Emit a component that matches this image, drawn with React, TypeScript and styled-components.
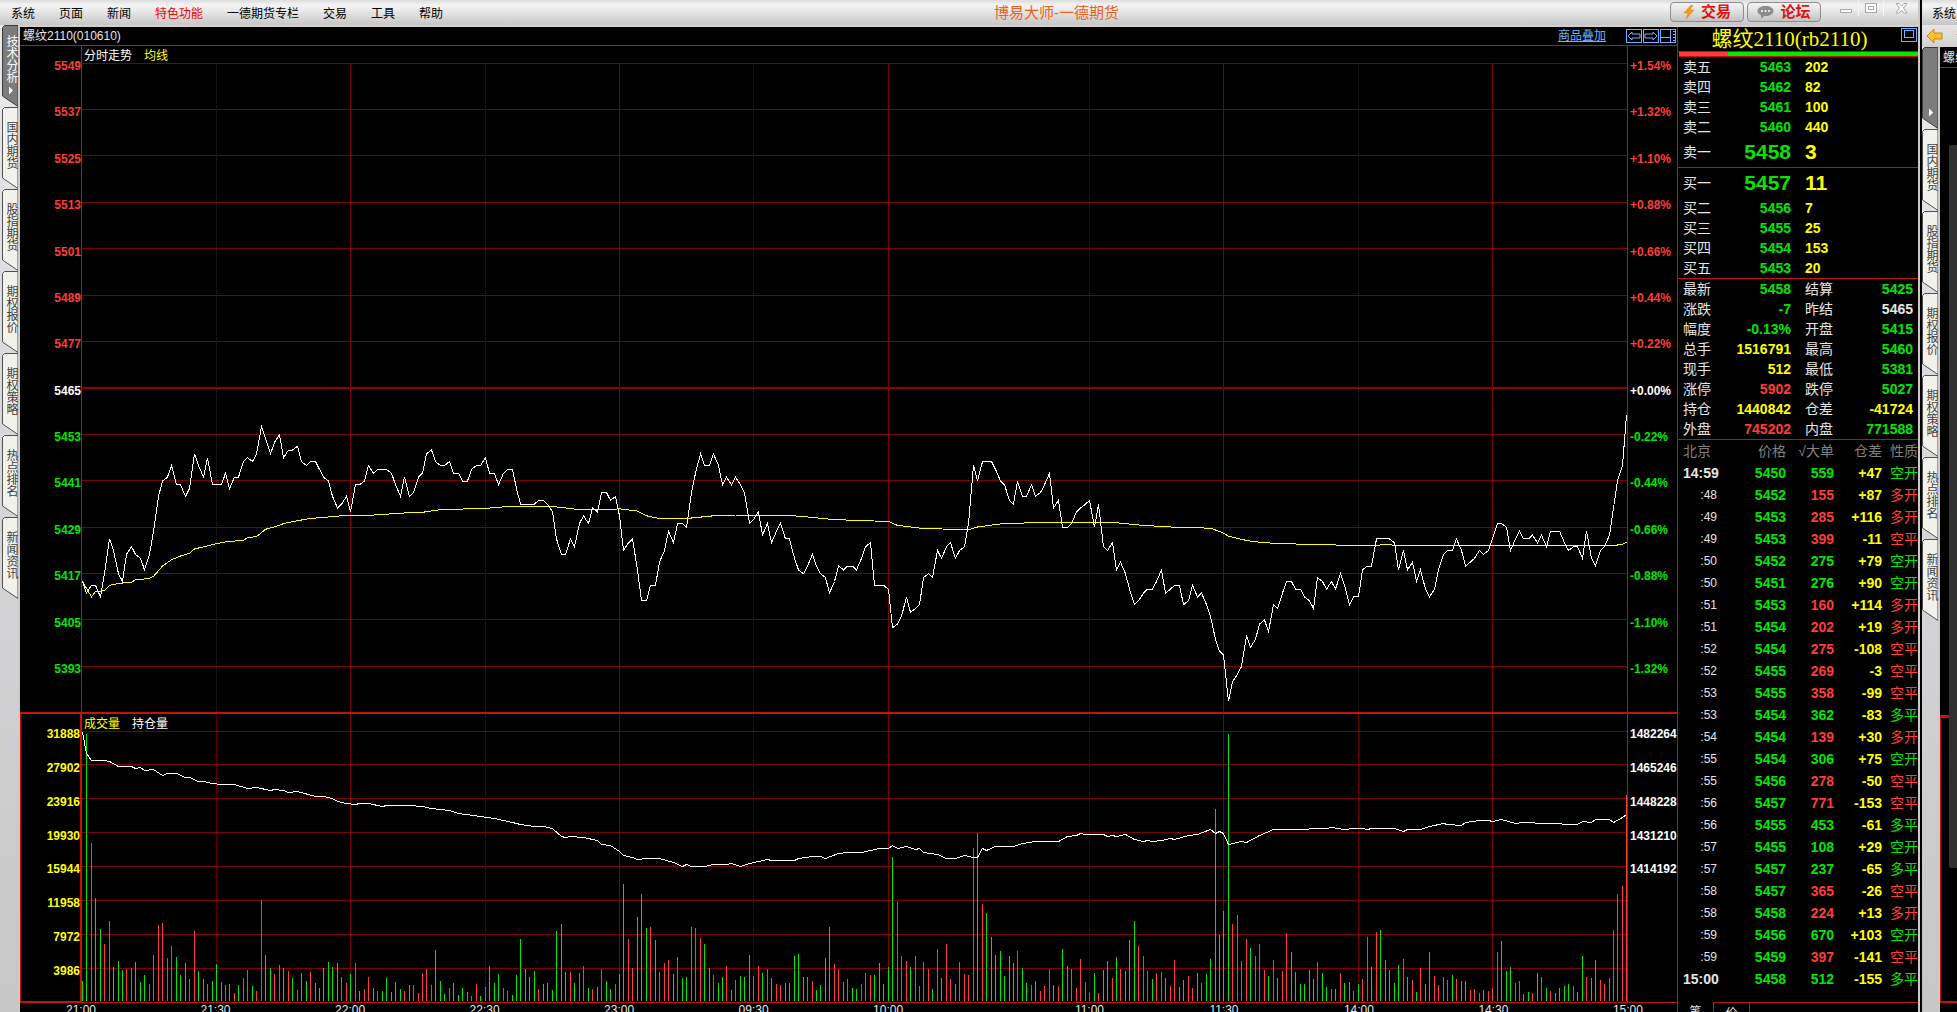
import React from "react";
import styled, { createGlobalStyle, css } from "styled-components";

const color = {
  red: "#ff3c37",
  green: "#00e600",
  yellow: "#ffff00",
  white: "#ffffff",
  text: "#e6e6e6",
  dim: "#808080",
  axis: "#c41408",
  grid: "#800000",
  link: "#6cb4ff",
};

type Tone = "red" | "green" | "yellow" | "white" | "text";

const Global = createGlobalStyle`
  * { box-sizing: border-box; }
  body {
    margin: 0;
    background: #000;
    font: 12px "Liberation Sans", "Noto Sans CJK SC", sans-serif;
    overflow: hidden;
  }
  button {
    font: inherit;
    border: 0;
    padding: 0;
    background: none;
    color: inherit;
    text-align: left;
  }
  svg { display: block; flex: none; }
`;

/* ---------- data ---------- */

const TOTAL_MINUTES = 345;

// Minute closes, 21:00 to 15:00.
const prices = [
  5415, 5412, 5414, 5414, 5411, 5417, 5426, 5423, 5417, 5415, 5422, 5424, 5422, 5421, 5418,
  5422, 5428, 5437, 5441, 5442, 5445, 5440, 5440, 5437, 5439, 5448, 5445, 5442, 5447, 5440,
  5440, 5440, 5443, 5439, 5442, 5442, 5446, 5447, 5446, 5448, 5455, 5452, 5448, 5451, 5453,
  5447, 5449, 5449, 5450, 5446, 5445, 5446, 5446, 5444, 5442, 5441, 5437, 5434, 5435, 5437,
  5433, 5440, 5440, 5441, 5445, 5443, 5444, 5444, 5444, 5443, 5440, 5437, 5442, 5437, 5438,
  5442, 5443, 5448, 5449, 5446, 5445, 5445, 5446, 5443, 5443, 5441, 5441, 5444, 5445, 5445,
  5447, 5443, 5443, 5440, 5443, 5444, 5444, 5439, 5435, 5435, 5435, 5435, 5436, 5436, 5435,
  5433, 5426, 5422, 5422, 5426, 5424, 5430, 5432, 5430, 5434, 5433, 5438, 5438, 5436, 5437,
  5432, 5423, 5425, 5426, 5418, 5410, 5410, 5414, 5414, 5420, 5423, 5428, 5425, 5430, 5430,
  5429, 5438, 5443, 5448, 5445, 5445, 5448, 5445, 5440, 5442, 5440, 5442, 5440, 5438, 5430,
  5431, 5433, 5427, 5430, 5425, 5428, 5430, 5426, 5426, 5421, 5418, 5417, 5419, 5422, 5419,
  5417, 5416, 5412, 5415, 5419, 5418, 5419, 5419, 5418, 5421, 5424, 5425, 5414, 5414, 5414,
  5413, 5403, 5404, 5406, 5411, 5407, 5408, 5409, 5416, 5417, 5416, 5423, 5421, 5424, 5425,
  5421, 5423, 5424, 5430, 5445, 5441, 5446, 5446, 5446, 5444, 5441, 5440, 5436, 5435, 5441,
  5437, 5437, 5440, 5437, 5438, 5440, 5443, 5434, 5436, 5429, 5429, 5430, 5433, 5434, 5435,
  5436, 5429, 5435, 5424, 5423, 5425, 5418, 5420, 5417, 5413, 5409, 5410, 5412, 5413, 5413,
  5415, 5418, 5412, 5413, 5414, 5414, 5409, 5410, 5414, 5411, 5412, 5409, 5406, 5400, 5397,
  5396, 5384, 5389, 5391, 5393, 5401, 5398, 5400, 5404, 5405, 5402, 5409, 5408, 5412, 5415,
  5415, 5413, 5413, 5411, 5410, 5408, 5416, 5415, 5413, 5415, 5413, 5417, 5414, 5409, 5411,
  5411, 5418, 5419, 5419, 5426, 5426, 5426, 5426, 5425, 5418, 5423, 5418, 5420, 5415, 5418,
  5413, 5411, 5413, 5418, 5422, 5423, 5423, 5426, 5423, 5419, 5420, 5421, 5423, 5422, 5423,
  5426, 5430, 5430, 5429, 5423, 5426, 5428, 5426, 5426, 5427, 5425, 5427, 5424, 5428, 5428,
  5428, 5425, 5423, 5424, 5424, 5421, 5428, 5421, 5419, 5423, 5424, 5427, 5434, 5441, 5445,
  5458,
];

// [minute, average price]
const average: [number, number][] = [
  [0, 5415], [2, 5411], [3, 5412.4], [5, 5412.6], [6, 5414], [8, 5414.5], [11, 5414.8],
  [12, 5415.4], [15, 5415.8], [16, 5416.3], [18, 5419], [20, 5420.6], [22, 5421.6],
  [24, 5422.3], [25, 5423.4], [30, 5424.8], [32, 5425.2], [36, 5425.7], [37, 5426.3],
  [39, 5426.6], [41, 5428.5], [44, 5429.5], [45, 5430], [49, 5430.9], [51, 5431.3],
  [58, 5432], [64, 5432.1], [72, 5432.7], [76, 5432.9], [80, 5433.6], [90, 5433.9],
  [94, 5434.3], [106, 5434.3], [111, 5433.6], [118, 5433.6], [120, 5433.8], [124, 5433.2],
  [126, 5432], [129, 5431.3], [135, 5431.3], [141, 5432], [146, 5432.2], [154, 5432.2],
  [160, 5431.9], [168, 5431], [180, 5430.5], [182, 5429.5], [188, 5428.7], [198, 5428.4],
  [200, 5429.1], [205, 5429.9], [212, 5430.2], [231, 5430.2], [236, 5429.6], [240, 5429.3],
  [246, 5428.9], [252, 5428.8], [255, 5427.5], [256, 5426.7], [260, 5425.6], [264, 5425],
  [275, 5424.5], [288, 5424.3], [291, 5424.5], [295, 5424.3], [342, 5424.3], [344, 5424.6],
  [345, 5425.2],
];

// Bar heights per minute; below zero marks a falling minute.
const volumes = [
  -20, -267, 158, -103, -72, 57, 80, -34, -40, -31, 32, 33, -39, -19, -26,
  17, 46, 76, 78, 43, 55, -44, -26, -38, 22, 70, -30, -22, 17, -20,
  -37, -19, 16, -17, 8, -16, 23, 31, -15, 10, 101, -46, -33, 27, 36,
  -33, 30, -23, 11, -28, -20, 29, -18, -13, -33, -39, -34, -38, 24, 18,
  -27, 38, -10, 12, 24, -13, 10, -10, -23, -9, -19, -12, 10, -16, 16,
  8, 28, 32, 16, -51, -20, -7, 13, -18, -6, -13, -9, 5, 17, -5,
  14, -35, -18, -27, 13, 10, -6, -26, -62, -32, -24, -30, 12, -17, -18,
  -11, -70, -77, -29, 29, -18, 28, 35, -13, 12, -14, 32, -20, -12, 17,
  -27, -117, 62, 33, -84, -107, -73, 74, -61, 29, 38, 41, -27, 44, -23,
  -24, 74, 73, 63, -57, -33, 26, -18, -24, 35, -11, 21, -25, -24, -46,
  25, 35, -28, 32, -23, 17, 16, -18, -18, -45, -47, -24, 24, 20, -11,
  -16, -43, -74, 37, 32, -19, 22, -13, -12, 17, 28, 26, -26, -38, -17,
  -34, -144, 99, 45, 40, -34, 45, 15, 39, 32, -12, 52, -23, 57, 22,
  -17, 39, 27, 26, 153, -168, 97, -88, -64, -46, -50, -25, -45, -38, 50,
  -33, -18, 16, -20, 10, 15, 32, -16, 15, -52, -35, 32, 13, 42, 19,
  8, -28, 8, -31, -40, 23, -44, 32, -30, -61, -80, 55, 45, 30, -22,
  28, 29, -23, 15, 41, -14, -21, 25, 13, -28, 18, -27, -42, -192, -66,
  -90, -267, 77, 86, 40, 62, -53, 45, 57, 31, -25, 41, -23, 30, 68,
  -49, -29, -17, -17, -31, -22, 39, -28, -14, 12, -12, 28, -18, -19, 10,
  -17, 22, 64, -34, 69, -71, -41, -31, -18, -36, 42, -24, 21, -9, 33,
  -17, -49, 25, 16, 24, 21, -26, 22, -20, -20, 11, 12, 8, -11, 10,
  13, 49, -60, -30, -34, 18, 20, -7, -9, 8, -28, 24, -13, 10, -8,
  -13, -15, -17, 15, -9, -45, 24, -23, -41, 21, 17, 23, 71, 107, 115,
  206,
];

// [minute, depth below the pane top] of the open interest curve
const openInterest: [number, number][] = [
  [0, 18], [1, 39], [2, 46], [5, 46], [6, 47], [8, 52], [11, 52], [12, 54], [13, 53], [14, 56],
  [16, 55], [18, 61], [19, 59], [21, 59], [23, 63], [24, 63], [26, 67], [27, 67], [29, 69],
  [31, 70], [34, 70], [37, 74], [39, 73], [42, 76], [43, 75], [45, 76], [46, 78], [48, 77],
  [52, 82], [54, 82], [56, 84], [57, 87], [59, 89], [61, 90], [62, 89], [64, 89], [67, 92],
  [68, 91], [73, 91], [76, 92], [78, 94], [82, 96], [84, 99], [89, 102], [92, 104], [96, 108],
  [98, 110], [101, 112], [103, 112], [105, 114], [107, 122], [108, 123], [109, 122], [112, 123],
  [115, 126], [116, 130], [118, 131], [120, 137], [121, 141], [123, 143], [124, 145], [126, 144],
  [129, 144], [132, 148], [134, 152], [135, 150], [136, 152], [139, 152], [141, 150], [144, 150],
  [145, 149], [147, 152], [149, 149], [153, 145], [154, 146], [159, 146], [160, 144], [163, 142],
  [165, 142], [166, 144], [169, 139], [171, 138], [174, 138], [178, 134], [180, 134], [181, 131],
  [182, 134], [184, 132], [186, 135], [187, 134], [188, 138], [191, 140], [193, 144], [195, 144],
  [197, 141], [199, 143], [200, 143], [201, 134], [202, 136], [204, 132], [208, 132], [210, 129],
  [213, 127], [218, 127], [220, 122], [222, 121], [223, 119], [224, 120], [228, 120], [229, 122],
  [230, 121], [231, 122], [233, 120], [235, 125], [237, 127], [238, 126], [239, 127], [241, 126],
  [243, 124], [244, 125], [247, 121], [249, 120], [252, 115], [253, 119], [254, 117], [255, 119],
  [256, 130], [259, 127], [260, 128], [263, 121], [266, 115], [270, 115], [278, 114], [279, 113],
  [282, 115], [284, 114], [286, 114], [287, 115], [288, 114], [293, 114], [295, 117], [296, 115],
  [299, 115], [301, 112], [304, 109], [305, 110], [308, 111], [309, 108], [312, 106], [314, 106],
  [315, 107], [317, 105], [320, 109], [322, 108], [324, 108], [325, 109], [330, 109], [331, 110],
  [334, 110], [335, 107], [337, 108], [338, 105], [341, 105], [342, 108], [344, 103], [345, 100],
];

const priceScale: [string, string, Tone][] = [
  ["5549", "+1.54%", "red"], ["5537", "+1.32%", "red"], ["5525", "+1.10%", "red"],
  ["5513", "+0.88%", "red"], ["5501", "+0.66%", "red"], ["5489", "+0.44%", "red"],
  ["5477", "+0.22%", "red"], ["5465", "+0.00%", "white"], ["5453", "-0.22%", "green"],
  ["5441", "-0.44%", "green"], ["5429", "-0.66%", "green"], ["5417", "-0.88%", "green"],
  ["5405", "-1.10%", "green"], ["5393", "-1.32%", "green"],
];

const volumeScale = ["31888", "27902", "23916", "19930", "15944", "11958", "7972", "3986"];
const interestScale = ["1482264", "1465246", "1448228", "1431210", "1414192", "", "", ""];

// [label, minutes until the next label, dotted grid line]
const timeTicks: [string, number, boolean][] = [
  ["21:00", 30, false], ["21:30", 30, true], ["22:00", 30, false], ["22:30", 30, true],
  ["23:00", 30, false], ["09:30", 30, true], ["10:00", 45, false], ["11:00", 30, true],
  ["11:30", 30, false], ["14:00", 30, true], ["14:30", 30, false], ["15:00", 0, false],
];

const asks = [["卖五", "5463", "202"], ["卖四", "5462", "82"], ["卖三", "5461", "100"], ["卖二", "5460", "440"], ["卖一", "5458", "3"]];
const bids = [["买一", "5457", "11"], ["买二", "5456", "7"], ["买三", "5455", "25"], ["买四", "5454", "153"], ["买五", "5453", "20"]];

const stats: [string, string, Tone, string, string, Tone][] = [
  ["最新", "5458", "green", "结算", "5425", "green"],
  ["涨跌", "-7", "green", "昨结", "5465", "text"],
  ["幅度", "-0.13%", "green", "开盘", "5415", "green"],
  ["总手", "1516791", "yellow", "最高", "5460", "green"],
  ["现手", "512", "yellow", "最低", "5381", "green"],
  ["涨停", "5902", "red", "跌停", "5027", "green"],
  ["持仓", "1440842", "yellow", "仓差", "-41724", "yellow"],
  ["外盘", "745202", "red", "内盘", "771588", "green"],
];

const trades: [string, string, string, string, string, Tone][] = [
  ["14:59", "5450", "559", "+47", "空开", "green"],
  [":48", "5452", "155", "+87", "多开", "red"],
  [":49", "5453", "285", "+116", "多开", "red"],
  [":49", "5453", "399", "-11", "空平", "red"],
  [":50", "5452", "275", "+79", "空开", "green"],
  [":50", "5451", "276", "+90", "空开", "green"],
  [":51", "5453", "160", "+114", "多开", "red"],
  [":51", "5454", "202", "+19", "多开", "red"],
  [":52", "5454", "275", "-108", "空平", "red"],
  [":52", "5455", "269", "-3", "空平", "red"],
  [":53", "5455", "358", "-99", "空平", "red"],
  [":53", "5454", "362", "-83", "多平", "green"],
  [":54", "5454", "139", "+30", "多开", "red"],
  [":55", "5454", "306", "+75", "空开", "green"],
  [":55", "5456", "278", "-50", "空平", "red"],
  [":56", "5457", "771", "-153", "空平", "red"],
  [":56", "5455", "453", "-61", "多平", "green"],
  [":57", "5455", "108", "+29", "空开", "green"],
  [":57", "5457", "237", "-65", "多平", "green"],
  [":58", "5457", "365", "-26", "空平", "red"],
  [":58", "5458", "224", "+13", "多开", "red"],
  [":59", "5456", "670", "+103", "空开", "green"],
  [":59", "5459", "397", "-141", "空平", "red"],
  ["15:00", "5458", "512", "-155", "多平", "green"],
];

const menu = ["系统", "页面", "新闻", "特色功能", "一德期货专栏", "交易", "工具", "帮助"];
const sideTabs = ["国内期货", "股指期货", "期权报价", "期权策略", "热点排名", "新闻资讯"];

/* ---------- frame ---------- */

const Screen = styled.div`
  display: flex;
  height: 100vh;
  overflow: hidden;
  background: #000;
  color: ${color.text};
`;

const AppWindow = styled.div<{ $main?: boolean }>`
  display: flex;
  flex-direction: column;
  min-width: 0;
  overflow: hidden;
  ${(p) =>
    p.$main
      ? css`
          flex: 1;
          border-right: 2px solid #d0c8c6;
          margin-right: 2px;
        `
      : css`
          flex: 0 0 35px;
        `}
`;

const MenuBar = styled.header`
  flex: none;
  display: flex;
  height: 27px;
  padding-left: 11px;
  background: linear-gradient(#dcdcdc 0, #f4f4f4 5px, #ececec 9px, #c6c6c6 25px, #d4cecc 25px);
  overflow: hidden;
`;

const MenuNav = styled.nav`
  display: flex;
  gap: 24px;
`;

const MenuItem = styled.button<{ $hot?: boolean }>`
  height: 25px;
  color: ${(p) => (p.$hot ? "#ff0000" : "#000")};
  white-space: nowrap;
`;

const WindowTitle = styled.h1`
  flex: 1;
  margin: 0;
  font-size: 15px;
  font-weight: 400;
  line-height: 26px;
  text-align: center;
  color: #f0611e;
`;

const MenuActions = styled.div`
  display: flex;
  gap: 3px;
  padding-top: 2px;
`;

const ActionButton = styled.button`
  display: flex;
  align-items: center;
  justify-content: center;
  gap: 6px;
  width: 74px;
  height: 20px;
  border: 1px solid #8c8c8c;
  border-radius: 4px;
  background: linear-gradient(#f4f4f4, #dedede 50%, #c2c2c2);
  font-size: 15px;
  font-weight: 700;
  line-height: 18px;
  color: #dc1414;
`;

const WindowControls = styled.div`
  display: flex;
  padding-left: 13px;
`;

const ControlButton = styled.button`
  display: flex;
  align-items: center;
  justify-content: center;
  width: 25px;
  height: 16px;
  border-right: 1px solid #f4f4f4;
  &:last-child { width: 34px; border-right: 0; }
`;

const WindowBody = styled.div`
  flex: 1;
  display: flex;
  min-height: 0;
`;

/* ---------- side tabs ---------- */

const TabRail = styled.nav<{ $flush?: boolean }>`
  flex: none;
  width: ${(p) => (p.$flush ? 18 : 20)}px;
  padding-left: ${(p) => (p.$flush ? 0 : 2)}px;
  margin-top: -2px;
  border-right: 2px solid #cfc8c6;
  background: linear-gradient(#eaeaea, #dcdce0 30%, #c6c6c6);
`;

const SideTab = styled.button<{ $active?: boolean }>`
  position: relative;
  display: flex;
  align-items: flex-start;
  width: 16px;
  height: 82px;
  padding: ${(p) => (p.$active ? 10 : 14)}px 0 0 2px;
  color: ${(p) => (p.$active ? "#fff" : "#404040")};
  font-size: 12px;
`;

const TabShape = styled.svg`
  position: absolute;
  inset: 0;
`;

const TabText = styled.span`
  position: relative;
  writing-mode: vertical-rl;
  line-height: 13px;
`;

function VerticalTab({ label, active }: { label: string; active?: boolean }) {
  return (
    <SideTab $active={active} aria-label={label || "当前页"}>
      <TabShape width="16" height="82" viewBox="0 0 16 82" aria-hidden="true">
        <path
          d="M16 .5H2.500L.5 2.500V71L16 81.500Z"
          fill={active ? "#7c7c7c" : "#f2f2ec"}
          stroke={active ? "#3c3c3c" : "#505050"}
        />
        {active && <path d="M7 61.500v8l4-4z" fill="#fff" />}
      </TabShape>
      <TabText>{label}</TabText>
    </SideTab>
  );
}

/* ---------- chart ---------- */

const ChartArea = styled.main`
  flex: 1;
  min-width: 0;
  display: flex;
  flex-direction: column;
  background: #000;
`;

const ChartHeader = styled.div`
  flex: none;
  display: flex;
  align-items: center;
  height: 19px;
  padding: 0 1px 0 3px;
  border-bottom: 1px solid ${color.axis};
`;

const Contract = styled.span`
  flex: 1;
  line-height: 18px;
`;

const OverlayLink = styled.a`
  margin-right: 20px;
  line-height: 18px;
  color: ${color.link};
  text-decoration: underline;
`;

const IconRow = styled.div`
  display: flex;
  gap: 1px;
`;

const Pane = styled.section<{ $grow: number }>`
  flex: ${(p) => p.$grow} 0 0;
  display: grid;
  grid-template-columns: 61px 1fr 49px;
  min-height: 0;
`;

const VolumePane = styled(Pane)`
  border-top: 2px solid ${color.axis};
  border-bottom: 1px solid ${color.axis};
`;

const Scale = styled.div<{ $side: "left" | "right"; $bottom: number; $framed?: boolean }>`
  display: flex;
  flex-direction: column;
  justify-content: space-between;
  padding: 13px 0 ${(p) => p.$bottom}px;
  text-align: ${(p) => (p.$side === "left" ? "right" : "left")};
  ${(p) => p.$side === "right" && "padding-left: 2px;"}
  ${(p) =>
    p.$framed &&
    css`
      border: solid ${color.axis};
      border-width: 0 1px 1px;
    `}
`;

const ScaleLabel = styled.span<{ $tone: Tone }>`
  height: 14px;
  font-size: 12px;
  font-weight: 700;
  line-height: 14px;
  color: ${(p) => color[p.$tone]};
`;

const PlotCell = styled.div`
  position: relative;
  display: flex;
  flex-direction: column;
  min-width: 0;
  min-height: 0;
  border: solid ${color.axis};
  border-width: 0 1px;
`;

const Legend = styled.div<{ $over?: boolean }>`
  flex: none;
  display: flex;
  gap: 12px;
  height: 17px;
  padding-left: 2px;
  line-height: 20px;
  ${(p) => p.$over && "position: absolute; top: 0; left: 0;"}
`;

const LegendItem = styled.span<{ $tone: Tone }>`
  color: ${(p) => color[p.$tone]};
`;

const Plot = styled.svg`
  flex: 1;
  width: 100%;
  height: 0;
  min-height: 0;
`;

const TimeAxis = styled.div`
  flex: none;
  display: flex;
  height: 9px;
  padding: 0 49px 0 61px;
  overflow: hidden;
`;

const TimeTick = styled.span<{ $minutes: number }>`
  flex: ${(p) => p.$minutes} 0 0;
  min-width: 0;
  line-height: 15px;
  color: ${color.text};
  white-space: nowrap;
  text-indent: -15px;
`;

const PLOT_WIDTH = 1545;
const PRICE_HEIGHT = 649;
const VOLUME_HEIGHT = 288;

const minuteX = (m: number) => Math.round(m * 4.4775 - 0.3);
const priceY = (p: number) => (5549 - p) * 3.8654;

const toPoints = (list: [number, number][], y: (v: number) => number) =>
  list.map(([m, v]) => `${minuteX(m) + 0.5},${(y(v) + 0.5).toFixed(1)}`).join(" ");

function TimeGrid({ height }: { height: number }) {
  let minute = 0;
  const lines = timeTicks.map(([label, span, dotted]) => {
    const at = minuteX(minute);
    minute += span;
    return { label, at, dotted };
  });
  return (
    <>
      {lines.slice(1, -1).map((l) => (
        <line
          key={l.label}
          x1={l.at + 0.5}
          x2={l.at + 0.5}
          y1="0"
          y2={height}
          stroke={color.grid}
          strokeDasharray={l.dotted ? "1 1" : undefined}
        />
      ))}
    </>
  );
}

function PriceChart() {
  return (
    <Plot
      viewBox={`0 0 ${PLOT_WIDTH} ${PRICE_HEIGHT}`}
      preserveAspectRatio="none"
      shapeRendering="crispEdges"
      role="img"
      aria-label="分时走势"
    >
      {priceScale.map(([p], i) => (
        <rect key={p} x="0" y={Math.round(i * 46.385 - 0.3)} width={PLOT_WIDTH} height={i === 7 ? 2 : 1} fill={i === 7 ? "#900000" : color.grid} />
      ))}
      <TimeGrid height={PRICE_HEIGHT} />
      <polyline points={toPoints(average, priceY)} fill="none" stroke={color.yellow} />
      <polyline
        points={toPoints(prices.map((p, i) => [i, p] as [number, number]), priceY)}
        fill="none"
        stroke={color.white}
      />
    </Plot>
  );
}

function VolumeChart() {
  return (
    <Plot
      viewBox={`0 0 ${PLOT_WIDTH} ${VOLUME_HEIGHT}`}
      preserveAspectRatio="none"
      shapeRendering="crispEdges"
      role="img"
      aria-label="成交量"
    >
      {volumeScale.map((v, i) => (
        <rect key={v} x="0" y={i === 0 ? 17 : 16 + i * 34} width={PLOT_WIDTH} height="1" fill={color.grid} />
      ))}
      <TimeGrid height={VOLUME_HEIGHT} />
      {volumes.slice(0, TOTAL_MINUTES + 1).map((v, i) => (
        <rect
          key={i}
          x={minuteX(i)}
          y={287 - Math.abs(v)}
          width="1"
          height={Math.abs(v)}
          fill={v < 0 ? color.green : color.red}
        />
      ))}
      <polyline points={toPoints(openInterest, (v) => v)} fill="none" stroke={color.white} />
    </Plot>
  );
}

/* ---------- quote panel ---------- */

const QuotePanel = styled.aside`
  flex: 0 0 241px;
  display: flex;
  flex-direction: column;
  border-left: 1px solid ${color.axis};
  background: #000;
`;

const QuoteHead = styled.div`
  flex: none;
  display: flex;
  height: 25px;
  padding: 1px 1px 0 0;
  border-bottom: 1px solid ${color.axis};
`;

const QuoteTitle = styled.h2`
  flex: 1;
  margin: 0;
  font: 400 21px/22px "Liberation Serif", "Noto Sans CJK SC", serif;
  text-align: center;
  white-space: nowrap;
  color: ${color.yellow};
`;

const PressureBar = styled.div`
  flex: none;
  height: 5px;
  margin-left: 1px;
  border-bottom: 1px solid ${color.axis};
  background: linear-gradient(90deg, ${color.red} 49px, ${color.green} 49px);
`;

const Table = styled.table`
  flex: none;
  width: 100%;
  border-collapse: collapse;
  table-layout: fixed;
  font-size: 14px;
`;

const BookTable = styled(Table)`
  border-bottom: 1px solid ${color.axis};
`;

const Row = styled.tr<{ $h: number }>`
  height: ${(p) => p.$h}px;
`;

const labelStyle = css`
  padding: 0 0 0 5px;
  font-weight: 400;
  text-align: left;
  color: ${color.text};
`;

const RowLabel = styled.th`
  ${labelStyle}
  line-height: 20px;
`;

const Num = styled.td<{ $tone: Tone; $big?: boolean; $left?: boolean; $end?: number }>`
  padding: 0 ${(p) => p.$end ?? 0}px 0 ${(p) => (p.$left ? 14 : 0)}px;
  font-size: ${(p) => (p.$big ? 21 : 14)}px;
  font-weight: 700;
  line-height: 20px;
  text-align: ${(p) => (p.$left ? "left" : "right")};
  white-space: nowrap;
  color: ${(p) => color[p.$tone]};
`;

const SecondLabel = styled.th`
  ${labelStyle}
  padding-left: 14px;
  line-height: 20px;
`;

const HeadCell = styled.th<{ $left?: boolean }>`
  padding: 0 0 0 ${(p) => (p.$left ? 5 : 0)}px;
  font-weight: 400;
  line-height: 20px;
  text-align: ${(p) => (p.$left ? "left" : "right")};
  white-space: nowrap;
  color: ${color.dim};
`;

const TimeCell = styled.td<{ $full: boolean }>`
  padding: 0 4px 0 5px;
  line-height: 20px;
  color: ${color.text};
  ${(p) => (p.$full ? "font-weight: 700; white-space: nowrap;" : "font-size: 12px; text-align: right;")}
`;

const Nature = styled.td<{ $tone: Tone }>`
  padding: 0;
  line-height: 20px;
  text-align: right;
  color: ${(p) => color[p.$tone]};
`;

const FootTabs = styled.div`
  display: flex;
  height: 10px;
  margin-top: auto;
  overflow: hidden;
`;

const FootTab = styled.button<{ $active?: boolean }>`
  width: 36px;
  height: 20px;
  line-height: 16px;
  text-align: center;
  color: ${color.text};
  border: solid ${color.axis};
  border-width: ${(p) => (p.$active ? "0 1px 0 0" : "1px 1px 0 0")};
`;

const FootRule = styled.div`
  flex: 1;
  border-top: 1px solid ${color.axis};
`;

function Book({ rows, best }: { rows: string[][]; best: number }) {
  return (
    <BookTable>
      <colgroup>
        <col width="43" />
        <col width="70" />
        <col />
      </colgroup>
      <tbody>
        {rows.map(([label, price, lots], i) => (
          <Row key={label} $h={i === best ? 30 : 20}>
            <RowLabel scope="row">{label}</RowLabel>
            <Num $tone="green" $big={i === best}>{price}</Num>
            <Num $tone="yellow" $left $big={i === best}>{lots}</Num>
          </Row>
        ))}
      </tbody>
    </BookTable>
  );
}

/* ---------- neighbouring window ---------- */

const Toolbar = styled.div`
  flex: none;
  display: flex;
  align-items: center;
  gap: 12px;
  height: 22px;
  padding-left: 4px;
  margin-top: -2px;
  background: linear-gradient(#e6e6e6, #d2d2d2);
  overflow: hidden;
`;

const PeekMenu = styled(MenuBar)`
  padding-left: 10px;
`;

const PeekBody = styled(WindowBody)`
  margin-top: 2px;
`;

const Peek = styled.div`
  flex: 1;
  min-width: 0;
  display: flex;
  flex-direction: column;
  background: #000;
  overflow: hidden;
`;

const PeekHeader = styled.div`
  flex: none;
  height: 19px;
  padding-left: 3px;
  line-height: 18px;
  white-space: nowrap;
  overflow: hidden;
  border-bottom: 1px solid ${color.axis};
`;

const PeekPane = styled.div<{ $grow: number; $framed?: boolean }>`
  flex: ${(p) => p.$grow} 0 0;
  position: relative;
  ${(p) =>
    p.$framed &&
    css`
      border: solid ${color.axis};
      border-width: 3px 0 2px 1px;
    `}
`;

const PeekFoot = styled.div`
  flex: none;
  height: 9px;
`;

const FloatingStrip = styled.div`
  position: absolute;
  z-index: 1;
  top: 77px;
  right: 0;
  width: 8px;
  height: 723px;
  border-radius: 2px 0 0 2px;
  background: #303030;
`;

function BoxIcon({ children }: { children: React.ReactNode }) {
  return (
    <svg width="16" height="14" viewBox="0 0 16 14" fill="none" stroke={color.link} shapeRendering="crispEdges" aria-hidden="true">
      <rect x=".5" y=".5" width="15" height="13" />
      {children}
    </svg>
  );
}

export default function App() {
  return (
    <Screen>
      <Global />
      <AppWindow $main>
        <MenuBar>
          <MenuNav>
            {menu.map((m) => (
              <MenuItem key={m} $hot={m === "特色功能"}>{m}</MenuItem>
            ))}
          </MenuNav>
          <WindowTitle>博易大师-一德期货</WindowTitle>
          <MenuActions>
            <ActionButton>
              <svg width="12" height="14" viewBox="0 0 12 14" aria-hidden="true">
                <path d="M8 0 1 8h4l-2 6 8-9H7l3-5z" fill="#f79a1c" stroke="#d9720a" strokeWidth=".4" />
              </svg>
              交易
            </ActionButton>
            <ActionButton>
              <svg width="17" height="14" viewBox="0 0 17 14" aria-hidden="true">
                <path d="M8.500 1C4 1 .5 3 .5 6c0 2 1.500 3.500 3.500 4.300L4 13.500 7.500 11C13 11.300 16.500 9 16.500 6c0-3-3.500-5-8-5z" fill="#8c8c8c" />
                <circle cx="5" cy="6" r="1" fill="#fff" />
                <circle cx="8.500" cy="6" r="1" fill="#fff" />
                <circle cx="12" cy="6" r="1" fill="#fff" />
              </svg>
              论坛
            </ActionButton>
          </MenuActions>
          <WindowControls>
            <ControlButton aria-label="最小化">
              <svg width="13" height="14" viewBox="0 0 13 14">
                <rect x=".5" y="8.500" width="11" height="3" fill="#fff" stroke="#a8a8a8" />
              </svg>
            </ControlButton>
            <ControlButton aria-label="最大化">
              <svg width="13" height="14" viewBox="0 0 13 14" fill="#fff" stroke="#a8a8a8">
                <rect x=".5" y="2.500" width="11" height="9" />
                <rect x="3.500" y="5.500" width="5" height="3" />
              </svg>
            </ControlButton>
            <ControlButton aria-label="关闭">
              <svg width="13" height="14" viewBox="0 0 13 14">
                <path d="M1 2.500h3l2.500 2.500L9 2.500h3L8.500 7l3.500 5H9L6.500 9 4 12H1l3.500-5z" fill="#fff" stroke="#a8a8a8" />
              </svg>
            </ControlButton>
          </WindowControls>
        </MenuBar>

        <WindowBody>
          <TabRail>
            <VerticalTab label="技术分析" active />
            {sideTabs.map((t) => <VerticalTab key={t} label={t} />)}
          </TabRail>

          <ChartArea>
            <ChartHeader>
              <Contract>螺纹2110(010610)</Contract>
              <OverlayLink href="#overlay">商品叠加</OverlayLink>
              <IconRow>
                <BoxIcon><path d="M2 7l4-4v2h8v4H6v2z" shapeRendering="auto" /></BoxIcon>
                <BoxIcon><path d="M14 7l-4-4v2H2v4h8v2z" shapeRendering="auto" /></BoxIcon>
                <BoxIcon><path d="M10.500 0v14M0 8.500h10M13 2.500h2M13 5.500h2M13 8.500h2M13 11.500h2" /></BoxIcon>
              </IconRow>
            </ChartHeader>

            <Pane $grow={666}>
              <Scale $side="left" $bottom={36}>
                {priceScale.map(([p, , tone]) => <ScaleLabel key={p} $tone={tone}>{p}</ScaleLabel>)}
              </Scale>
              <PlotCell>
                <Legend>
                  <LegendItem $tone="white">分时走势</LegendItem>
                  <LegendItem $tone="yellow">均线</LegendItem>
                </Legend>
                <PriceChart />
              </PlotCell>
              <Scale $side="right" $bottom={36}>
                {priceScale.map(([, pct, tone]) => <ScaleLabel key={pct} $tone={tone}>{pct}</ScaleLabel>)}
              </Scale>
            </Pane>

            <VolumePane $grow={288}>
              <Scale $side="left" $bottom={23} $framed>
                {volumeScale.map((v) => <ScaleLabel key={v} $tone="yellow">{v}</ScaleLabel>)}
              </Scale>
              <PlotCell>
                <VolumeChart />
                <Legend $over>
                  <LegendItem $tone="yellow">成交量</LegendItem>
                  <LegendItem $tone="white">持仓量</LegendItem>
                </Legend>
              </PlotCell>
              <Scale $side="right" $bottom={24}>
                {interestScale.map((v, i) => <ScaleLabel key={i} $tone="white">{v}</ScaleLabel>)}
              </Scale>
            </VolumePane>

            <TimeAxis>
              {timeTicks.map(([t, minutes]) => <TimeTick key={t} $minutes={minutes}>{t}</TimeTick>)}
            </TimeAxis>
          </ChartArea>

          <QuotePanel>
            <QuoteHead>
              <QuoteTitle>螺纹2110(rb2110)</QuoteTitle>
              <BoxIcon><rect x="3.500" y="2.500" width="9" height="7" /></BoxIcon>
            </QuoteHead>
            <PressureBar />
            <Book rows={asks} best={4} />
            <Book rows={bids} best={0} />
            <BookTable>
              <colgroup>
                <col width="43" />
                <col width="70" />
                <col width="57" />
                <col />
              </colgroup>
              <tbody>
                {stats.map(([a, av, at, b, bv, bt]) => (
                  <Row key={a} $h={20}>
                    <RowLabel scope="row">{a}</RowLabel>
                    <Num $tone={at}>{av}</Num>
                    <SecondLabel scope="row">{b}</SecondLabel>
                    <Num $tone={bt} $end={5}>{bv}</Num>
                  </Row>
                ))}
              </tbody>
            </BookTable>
            <Table>
              <colgroup>
                <col width="43" />
                <col width="65" />
                <col width="48" />
                <col width="48" />
                <col />
              </colgroup>
              <thead>
                <Row $h={22}>
                  <HeadCell $left>北京</HeadCell>
                  <HeadCell>价格</HeadCell>
                  <HeadCell>√大单</HeadCell>
                  <HeadCell>仓差</HeadCell>
                  <HeadCell>性质</HeadCell>
                </Row>
              </thead>
              <tbody>
                {trades.map(([time, price, lots, diff, nature, tone], i) => (
                  <Row key={i} $h={22}>
                    <TimeCell $full={time.length > 3}>{time}</TimeCell>
                    <Num $tone="green">{price}</Num>
                    <Num $tone={tone}>{lots}</Num>
                    <Num $tone="yellow">{diff}</Num>
                    <Nature $tone={tone}>{nature}</Nature>
                  </Row>
                ))}
              </tbody>
            </Table>
            <FootTabs>
              <FootTab $active>笔</FootTab>
              <FootTab>价</FootTab>
              <FootRule />
            </FootTabs>
          </QuotePanel>
        </WindowBody>
      </AppWindow>

      <AppWindow>
        <PeekMenu>
          <MenuItem>系统</MenuItem>
        </PeekMenu>
        <Toolbar>
          <svg width="17" height="16" viewBox="0 0 17 16" aria-hidden="true">
            <path d="M1 8l7-7v4h8v6H8v4z" fill="#fbc02d" stroke="#c98a14" />
          </svg>
          <svg width="17" height="16" viewBox="0 0 17 16" aria-hidden="true">
            <path d="M1 7l7-6 7 6h-4v8H5V7z" fill="#e04038" />
          </svg>
        </Toolbar>
        <PeekBody>
          <TabRail $flush>
            <VerticalTab label="" active />
            {sideTabs.map((t) => <VerticalTab key={t} label={t} />)}
          </TabRail>
          <Peek>
            <PeekHeader>螺纹</PeekHeader>
            <PeekPane $grow={647}>
              <FloatingStrip />
            </PeekPane>
            <PeekPane $grow={283} $framed />
            <PeekFoot />
          </Peek>
        </PeekBody>
      </AppWindow>
    </Screen>
  );
}
